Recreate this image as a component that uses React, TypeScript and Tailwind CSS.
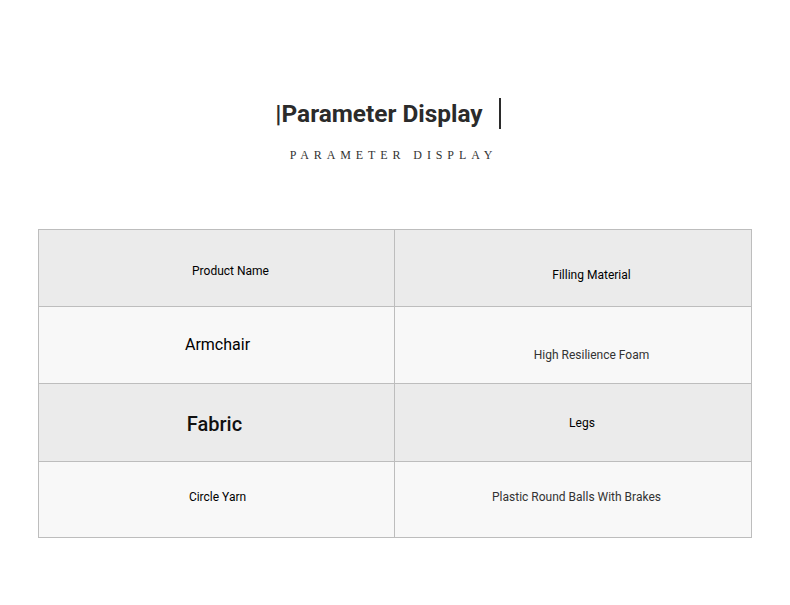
const rows = [
  {
    bg: 'bg-[#ebebeb]',
    h: 'h-[77px]',
    left: { text: 'Product Name', cls: 'text-[12px] text-black pl-[28px] pt-[6px]' },
    right: { text: 'Filling Material', cls: 'text-[12px] text-black pl-[37px] pt-[14px]' },
  },
  {
    bg: 'bg-[#f8f8f8]',
    h: 'h-[77px]',
    left: { text: 'Armchair', cls: 'text-[16px] text-black pl-[2px] pt-0' },
    right: { text: 'High Resilience Foam', cls: 'text-[12px] text-[#333] pl-[37px] pt-[19px]' },
  },
  {
    bg: 'bg-[#ebebeb]',
    h: 'h-[78px]',
    left: { text: 'Fabric', cls: 'text-[20px] font-medium text-[#111] pr-[4px] pt-[2px]' },
    right: { text: 'Legs', cls: 'text-[12px] text-black pl-[18px] pt-0' },
  },
  {
    bg: 'bg-[#f8f8f8]',
    h: 'h-[75px]',
    left: { text: 'Circle Yarn', cls: 'text-[12px] text-black pl-[2px] pb-[6px]' },
    right: { text: 'Plastic Round Balls With Brakes', cls: 'text-[12px] text-[#333] pl-[7px] pb-[6px]' },
  },
]

export default function App() {
  return (
    <div className="min-h-[605px] w-[790px] bg-white font-['Roboto',sans-serif]">
      <div className="flex flex-col items-center pt-[97px]">
        <div className="mr-[14px] flex items-center">
          <h1 className="text-[24.4px] font-bold leading-[33px] text-[#2b2b2b]">|Parameter Display</h1>
          <span className="ml-[16px] block h-[31px] w-[2px] bg-[#2b2b2b]" />
        </div>
        <p className="mt-[16px] pr-[3px] font-['Liberation_Serif',serif] text-[12px] uppercase tracking-[4.9px] text-[#333]">
          Parameter Display
        </p>
      </div>

      <div className="ml-[38px] mt-[65px] w-[714px] border border-[#bdbdbd]">
        {rows.map((row, i) => (
          <div
            key={i}
            className={`grid grid-cols-[356px_1fr] ${row.bg} ${row.h} ${i < rows.length - 1 ? 'border-b border-[#bdbdbd]' : ''}`}
          >
            <div className={`flex items-center justify-center border-r border-[#bdbdbd] ${row.left.cls}`}>
              {row.left.text}
            </div>
            <div className={`flex items-center justify-center ${row.right.cls}`}>
              {row.right.text}
            </div>
          </div>
        ))}
      </div>
    </div>
  )
}
